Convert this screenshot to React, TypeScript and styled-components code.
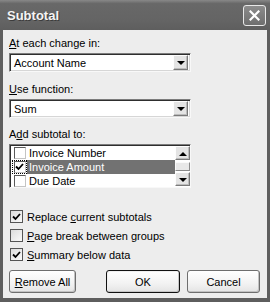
import React from "react"
import styled, { createGlobalStyle } from "styled-components"

const Global = createGlobalStyle`
  html, body {
    margin: 0;
    padding: 0;
    background: #5f5f5f;
  }
  body {
    font-family: "Liberation Sans", Arial, sans-serif;
    font-size: 11px;
    color: #000;
  }
`

const Window = styled.div`
  width: 270px;
  height: 302px;
  box-sizing: border-box;
  background: #5e5e5e;
  display: flex;
  flex-direction: column;
  padding: 0 3px 4px 3px;
`

const TitleBar = styled.div`
  height: 30px;
  flex: none;
  margin: 0 -3px;
  padding: 0 4px 0 7px;
  display: flex;
  align-items: center;
  justify-content: space-between;
  background: linear-gradient(#888888, #686868 12%, #646464 70%, #5e5e5e);
`

const Title = styled.span`
  font-size: 13px;
  font-weight: bold;
  color: #f4f4f4;
  text-shadow: 1px 1px #3c3c3c;
  margin-top: 1px;
`

const CloseButton = styled.div`
  width: 21px;
  height: 19px;
  border: 1px solid #e8e8e8;
  border-radius: 3px;
  background: linear-gradient(#8c8c8c, #6e6e6e);
  display: flex;
  align-items: center;
  justify-content: center;
  margin-top: 1px;
`

const Body = styled.div`
  flex: 1;
  background: #ededed;
  padding: 7px 6px 0 6px;
  display: flex;
  flex-direction: column;
`

const Label = styled.div<{ $gap?: number }>`
  line-height: 13px;
  height: 13px;
  margin-top: ${p => p.$gap ?? 0}px;
  margin-bottom: 3px;
  white-space: nowrap;
`

const Key = styled.span`
  text-decoration: underline;
  text-underline-offset: 1px;
`

const Combo = styled.div`
  width: 182px;
  height: 19px;
  box-sizing: border-box;
  background: #fff;
  border: 1px solid;
  border-color: #7c7c7c #f8f8f8 #f8f8f8 #7c7c7c;
  box-shadow: inset 1px 1px #2e2e2e, inset -1px -1px #d6d6d6;
  display: flex;
  align-items: center;
  justify-content: space-between;
  padding: 0 2px 0 4px;
`

const ArrowButton = styled.div<{ $h?: number }>`
  width: 15px;
  height: ${p => p.$h ?? 15}px;
  box-sizing: border-box;
  background: #e4e4e4;
  border: 1px solid;
  border-color: #fdfdfd #7a7a7a #7a7a7a #fdfdfd;
  box-shadow: inset -1px -1px #bcbcbc;
  display: flex;
  align-items: center;
  justify-content: center;
  flex: none;
`

const Tri = styled.div<{ $up?: boolean }>`
  width: 0;
  height: 0;
  border-left: 4px solid transparent;
  border-right: 4px solid transparent;
  ${p =>
    p.$up
      ? "border-bottom: 4px solid #000;"
      : "border-top: 4px solid #000;"}
  margin-top: 1px;
`

const ListBox = styled.div`
  width: 182px;
  height: 44px;
  box-sizing: border-box;
  background: #fff;
  border: 1px solid;
  border-color: #7c7c7c #f8f8f8 #f8f8f8 #7c7c7c;
  box-shadow: inset 1px 1px #2e2e2e;
  display: flex;
  padding: 1px 0 0 1px;
`

const Items = styled.div`
  flex: 1;
  display: flex;
  flex-direction: column;
`

const Item = styled.div`
  height: 14px;
  display: flex;
  align-items: stretch;
  padding-left: 1px;
  white-space: nowrap;
`

const ItemText = styled.span<{ $selected?: boolean }>`
  flex: 1;
  display: flex;
  align-items: center;
  padding-left: 2px;
  background: ${p => (p.$selected ? "#727272" : "transparent")};
  color: ${p => (p.$selected ? "#fff" : "#000")};
`

const Focus = styled.div<{ $on?: boolean }>`
  display: flex;
  align-items: center;
  justify-content: center;
  width: 15px;
  height: 14px;
  box-sizing: border-box;
  outline: ${p => (p.$on ? "1px dotted #000" : "none")};
  outline-offset: -1px;
`

const Box = styled.div<{ $size?: number }>`
  width: ${p => p.$size ?? 12}px;
  height: ${p => p.$size ?? 12}px;
  box-sizing: border-box;
  background: #fff;
  border: 1px solid;
  border-color: #5a5a5a #c4c4c4 #c4c4c4 #5a5a5a;
  display: flex;
  align-items: center;
  justify-content: center;
  flex: none;
`

const ScrollBar = styled.div`
  width: 15px;
  display: flex;
  flex-direction: column;
  justify-content: space-between;
  padding-bottom: 1px;
`

const Thumb = styled.div`
  height: 9px;
  box-sizing: border-box;
  background: #e8e8e8;
  border: 1px solid;
  border-color: #fafafa #8a8a8a #8a8a8a #fafafa;
`

const Options = styled.div`
  display: flex;
  flex-direction: column;
  gap: 6px;
  margin-top: 22px;
`

const Option = styled.div`
  height: 13px;
  display: flex;
  align-items: center;
  gap: 4px;
  padding-left: 1px;
  white-space: nowrap;
`

const OptionBox = styled(Box)`
  border: 1px solid #555;
  background: linear-gradient(135deg, #dcdcdc, #fafafa);
`

const Buttons = styled.div`
  display: flex;
  align-items: center;
  justify-content: space-between;
  margin-top: 9px;
  padding-right: 1px;
`

const ButtonGroup = styled.div`
  display: flex;
  gap: 7px;
`

const Button = styled.div<{ $w: number; $default?: boolean }>`
  width: ${p => p.$w}px;
  height: 23px;
  box-sizing: border-box;
  border: 1px solid ${p => (p.$default ? "#111" : "#6e6e6e")};
  border-radius: 3px;
  background: linear-gradient(#ffffff, #f2f2f2 60%, #e4e4e4);
  box-shadow: ${p =>
    p.$default
      ? "inset 1px 1px #f0f0f0, inset -1px -1px #c6c6c6"
      : "inset -1px -1px #c2c2c2"};
  display: flex;
  align-items: center;
  justify-content: center;
`

const Check = () => (
  <svg width="9" height="8" viewBox="0 0 9 8">
    <path d="M1 3.5 L3.5 6 L8 1" fill="none" stroke="#000" strokeWidth="1.8" />
  </svg>
)

const CloseX = () => (
  <svg width="11" height="11" viewBox="0 0 11 11">
    <path d="M1.5 1.5 L9.5 9.5 M9.5 1.5 L1.5 9.5" stroke="#fff" strokeWidth="2.2" strokeLinecap="square" />
  </svg>
)

const fields = [
  { name: "Invoice Number", checked: false },
  { name: "Invoice Amount", checked: true },
  { name: "Due Date", checked: false },
]

const App = () => (
  <>
    <Global />
    <Window>
      <TitleBar>
        <Title>Subtotal</Title>
        <CloseButton>
          <CloseX />
        </CloseButton>
      </TitleBar>
      <Body>
        <Label>
          <Key>A</Key>t each change in:
        </Label>
        <Combo>
          <span>Account Name</span>
          <ArrowButton>
            <Tri />
          </ArrowButton>
        </Combo>

        <Label $gap={11}>
          <Key>U</Key>se function:
        </Label>
        <Combo>
          <span>Sum</span>
          <ArrowButton>
            <Tri />
          </ArrowButton>
        </Combo>

        <Label $gap={10}>
          A<Key>d</Key>d subtotal to:
        </Label>
        <ListBox>
          <Items>
            {fields.map(f => (
              <Item key={f.name}>
                <Focus $on={f.checked}>
                  <Box>{f.checked && <Check />}</Box>
                </Focus>
                <ItemText $selected={f.checked}>{f.name}</ItemText>
              </Item>
            ))}
          </Items>
          <ScrollBar>
            <ArrowButton $h={14}>
              <Tri $up />
            </ArrowButton>
            <Thumb />
            <ArrowButton $h={14}>
              <Tri />
            </ArrowButton>
          </ScrollBar>
        </ListBox>

        <Options>
          <Option>
            <OptionBox $size={13}>
              <Check />
            </OptionBox>
            <span>
              Replace <Key>c</Key>urrent subtotals
            </span>
          </Option>
          <Option>
            <OptionBox $size={13} />
            <span>
              <Key>P</Key>age break between groups
            </span>
          </Option>
          <Option>
            <OptionBox $size={13}>
              <Check />
            </OptionBox>
            <span>
              <Key>S</Key>ummary below data
            </span>
          </Option>
        </Options>

        <Buttons>
          <Button $w={67}>
            <span>
              <Key>R</Key>emove All
            </span>
          </Button>
          <ButtonGroup>
            <Button $w={74} $default>
              OK
            </Button>
            <Button $w={73}>Cancel</Button>
          </ButtonGroup>
        </Buttons>
      </Body>
    </Window>
  </>
)

export default App
